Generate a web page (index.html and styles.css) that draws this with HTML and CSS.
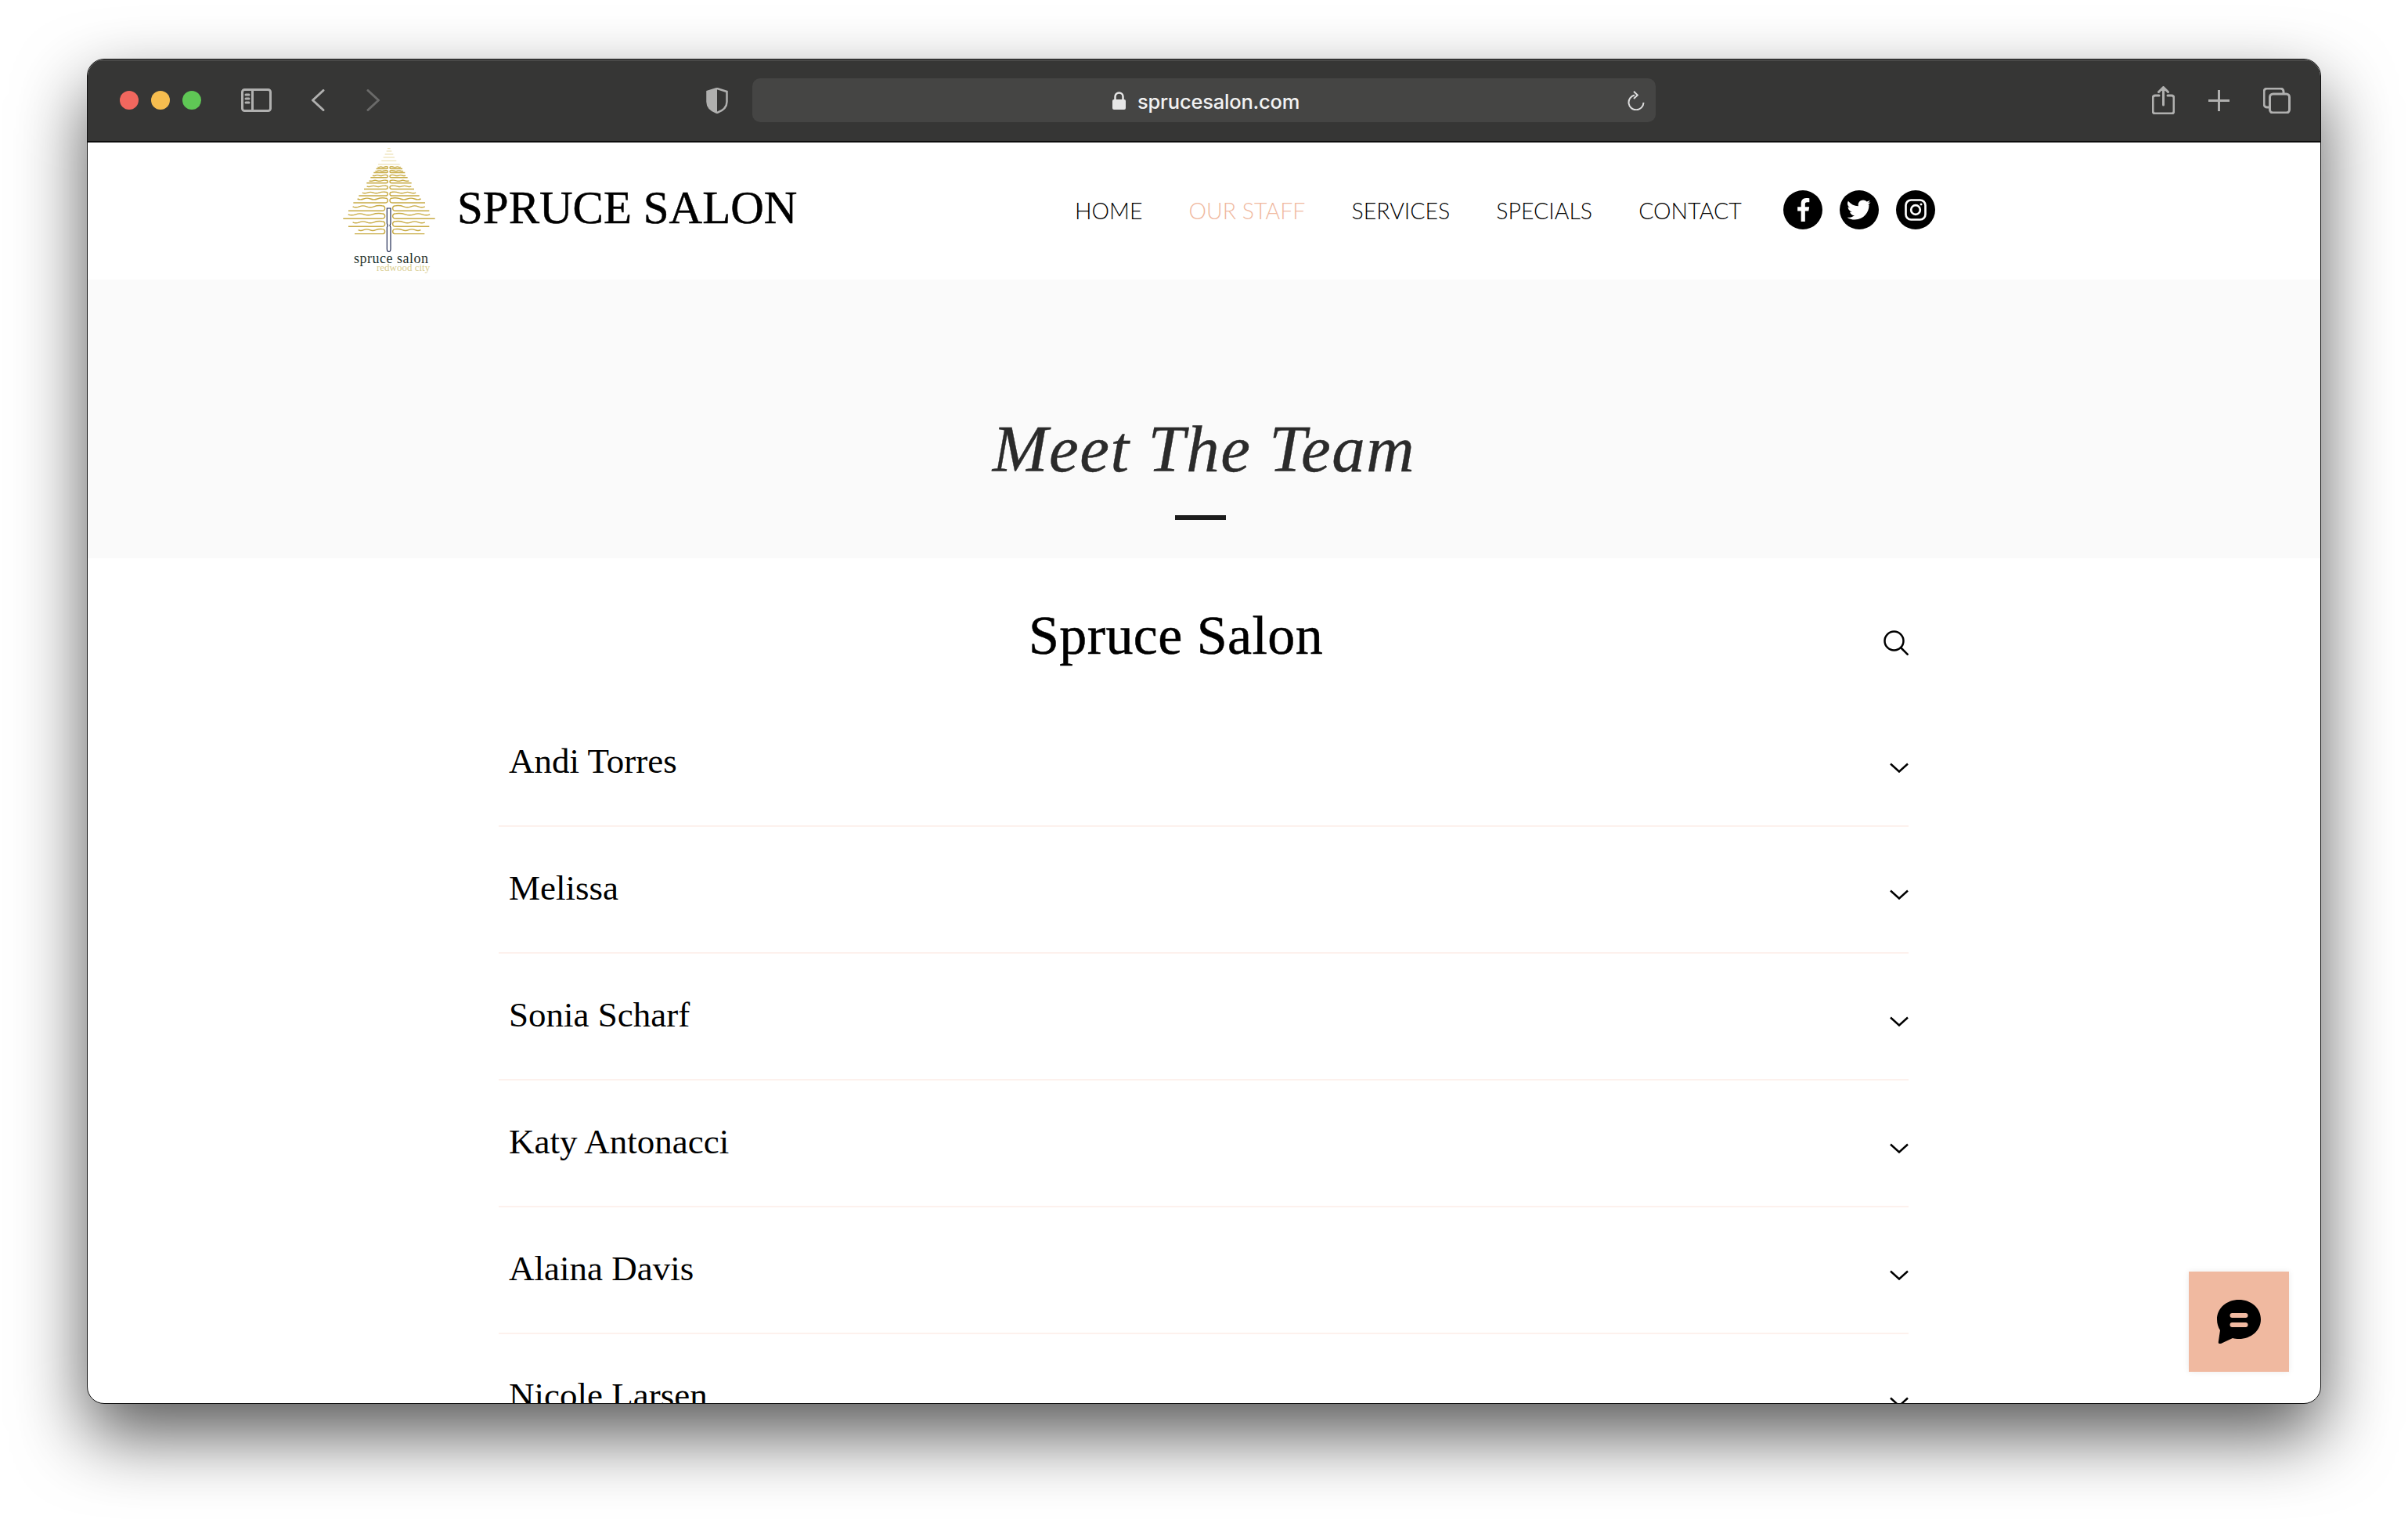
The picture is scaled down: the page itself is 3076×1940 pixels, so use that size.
FILE: index.html
```html
<!DOCTYPE html>
<html lang="en">
<head>
<meta charset="utf-8">
<title>Spruce Salon</title>
<link rel="stylesheet" href="styles.css">
</head>
<body>
<div class="window">
  <div class="chrome">
    <div class="lights"><i class="light red"></i><i class="light yellow"></i><i class="light green"></i></div>
    <svg class="ic sidebar" viewBox="0 0 39 30"><rect x="1.5" y="1.5" width="36" height="27" rx="3"/><path d="M14.5 1.5v27M6 8h4M6 13h4M6 18h4"/></svg>
    <svg class="ic back" viewBox="0 0 18 28"><path d="M16 1.5 2.5 14 16 26.500"/></svg>
    <svg class="ic forward" viewBox="0 0 18 28"><path d="M2 1.500 15.500 14 2 26.500"/></svg>
    <svg class="shield" viewBox="0 0 28 33"><path class="shield-o" d="M14 1 26.500 5v13c0 7-5.500 11.500-12.500 14C7 29.500 1.500 25 1.500 18V5Z"/><path class="shield-f" d="M14 1v31C7 29.500 1.500 25 1.500 18V5Z"/></svg>
    <div class="urlbar">
      <svg class="lock" viewBox="0 0 17 23"><path class="lock-s" d="M3.500 11V6.500a5 5 0 0 1 10 0V11"/><rect y="10" width="17" height="13" rx="2"/></svg>
      <span class="url">sprucesalon.com</span>
      <svg class="reload" viewBox="0 0 22 25"><path d="M9 5.500A9.500 9.500 0 1 0 20.500 15M8 .8 12.800 5.500 8 10"/></svg>
    </div>
    <div class="tools">
      <svg class="ic share" viewBox="0 0 29 36"><path d="M9 12H4a3 3 0 0 0-3 3v17a3 3 0 0 0 3 3h21a3 3 0 0 0 3-3V15a3 3 0 0 0-3-3h-5M14.500 24V2M8.500 7.500l6-6 6 6"/></svg>
      <svg class="ic plus" viewBox="0 0 27 27"><path d="M13.500 0v27M0 13.500h27"/></svg>
      <svg class="ic tabs" viewBox="0 0 35 33"><path d="M7 25H5a4 4 0 0 1-4-4V5a4 4 0 0 1 4-4h17a4 4 0 0 1 4 4v2"/><rect x="8.500" y="8" width="25" height="24" rx="4"/></svg>
    </div>
  </div>

  <div class="page">
    <header class="site-head">
      <div class="logo">
        <svg class="tree" viewBox="0 0 600 420">
          <defs><path id="s" class="strand" d="M0 19H92Q100 19 100 10T92 1Q80-1 70 4T50 4 30 4 12 4"/></defs>
          <g class="gold">
            <use href="#s" transform="translate(102 364) scale(1.16 1)"/><use href="#s" transform="translate(370 364) scale(-1.22 1)"/>
            <use href="#s" transform="translate(78 334) scale(1.4 1.1)"/><use href="#s" transform="translate(388 334) scale(-1.4 1.1)"/>
            <use href="#s" transform="translate(58 304) scale(1.6 1.1)"/><use href="#s" transform="translate(410 304) scale(-1.62 1.1)"/>
            <use href="#s" transform="translate(78 274) scale(1.4 1.1)"/><use href="#s" transform="translate(388 274) scale(-1.4 1.1)"/>
            <use href="#s" transform="translate(97 245) scale(1.32 1)"/><use href="#s" transform="translate(372 245) scale(-1.35 1)"/>
            <use href="#s" transform="translate(118 222) scale(1.11 .8)"/><use href="#s" transform="translate(350 222) scale(-1.13 .8)"/>
            <use href="#s" transform="translate(138 198) scale(.91 .7)"/><use href="#s" transform="translate(330 198) scale(-.93 .7)"/>
            <use href="#s" transform="translate(148 177) scale(.81 .6)"/><use href="#s" transform="translate(320 177) scale(-.83 .6)"/>
            <use href="#s" transform="translate(163 157) scale(.66 .55)"/><use href="#s" transform="translate(305 157) scale(-.68 .55)"/>
            <use href="#s" transform="translate(175 140) scale(.54 .45)"/><use href="#s" transform="translate(295 140) scale(-.58 .45)"/>
            <use href="#s" transform="translate(185 125) scale(.44 .45)"/><use href="#s" transform="translate(285 125) scale(-.48 .45)"/>
          </g>
          <path class="lines" d="M192 117H275M205 103H262M212 90H255M218 78H250M224 66H244M228 56H239"/>
          <path class="trunk" d="M226 285h14v58l-3 8 3 7v82q0 11-7 11t-7-11v-82l3-7-3-8Z"/>
        </svg>
        <div class="logo-name">spruce salon</div>
        <div class="logo-city">redwood city</div>
      </div>
      <div class="brand">SPRUCE SALON</div>
      <nav class="nav">
        <a>HOME</a><a class="active">OUR STAFF</a><a>SERVICES</a><a>SPECIALS</a><a>CONTACT</a>
      </nav>
      <div class="social">
        <span class="soc"><svg viewBox="0 0 24 24"><path d="M13.700 21v-8.100h2.700l.5-3.200h-3.200v-2c0-.9.300-1.600 1.600-1.600H17V3.200C16.700 3.100 15.700 3 14.600 3c-2.400 0-4 1.400-4 4.100v2.600H7.900v3.200h2.700V21Z"/></svg></span>
        <span class="soc"><svg viewBox="0 0 24 24"><path d="M19.500 8.100v.5c0 5.100-3.900 10.900-10.900 10.900-2.200 0-4.200-.6-5.900-1.700.3 0 .6.100.9.100 1.800 0 3.400-.6 4.800-1.600-1.700 0-3.100-1.100-3.600-2.700.2 0 .5.100.7.100.3 0 .7 0 1-.1-1.800-.4-3.100-1.900-3.100-3.800v0c.5.300 1.100.5 1.700.5C3.700 9.700 3 8.500 3 7.100c0-.7.200-1.400.5-1.900C5.400 7.500 8.200 9 11.300 9.200c-.1-.3-.1-.6-.1-.9 0-2.100 1.700-3.800 3.800-3.800 1.100 0 2.100.5 2.800 1.200.9-.2 1.700-.5 2.400-1-.3.900-.9 1.700-1.700 2.100.8-.1 1.500-.3 2.200-.6-.5.8-1.200 1.400-1.900 1.900Z"/></svg></span>
        <span class="soc"><svg class="insta" viewBox="0 0 24 24"><rect x="4.500" y="4.500" width="15" height="15" rx="4"/><circle cx="12" cy="12" r="3.500"/><circle class="dot" cx="16.200" cy="7.800" r=".9"/></svg></span>
      </div>
    </header>

    <section class="hero">
      <h1 class="hero-title">Meet The Team</h1>
      <div class="hero-rule"></div>
    </section>

    <section class="staff">
      <div class="staff-head">
        <h2 class="staff-title">Spruce Salon</h2>
        <svg class="search" viewBox="0 0 32 32"><circle cx="13.500" cy="13.500" r="12"/><path d="m22.500 22.500 9 9"/></svg>
      </div>
      <div class="row"><span class="name">Andi Torres</span><svg class="chev" viewBox="0 0 24 13"><path d="M1 1.500 12 11.500 23 1.500"/></svg></div>
      <div class="row"><span class="name">Melissa</span><svg class="chev" viewBox="0 0 24 13"><path d="M1 1.500 12 11.500 23 1.500"/></svg></div>
      <div class="row"><span class="name">Sonia Scharf</span><svg class="chev" viewBox="0 0 24 13"><path d="M1 1.500 12 11.500 23 1.500"/></svg></div>
      <div class="row"><span class="name">Katy Antonacci</span><svg class="chev" viewBox="0 0 24 13"><path d="M1 1.500 12 11.500 23 1.500"/></svg></div>
      <div class="row"><span class="name">Alaina Davis</span><svg class="chev" viewBox="0 0 24 13"><path d="M1 1.500 12 11.500 23 1.500"/></svg></div>
      <div class="row"><span class="name">Nicole Larsen</span><svg class="chev" viewBox="0 0 24 13"><path d="M1 1.500 12 11.500 23 1.500"/></svg></div>
    </section>

    <div class="chat">
      <svg viewBox="0 0 56 56"><path class="bubble" d="M28 0c15.500 0 28 10.500 28 25S43.500 50 28 50c-3 0-5.500-.3-8-1L5 56c-2 .8-3.500 0-3.200-2.300L4 39C1.500 35 0 30.500 0 25 0 10.500 12.500 0 28 0Z"/><rect class="bar" x="16.500" y="17" width="23" height="6" rx="3"/><rect class="bar" x="16.500" y="29" width="23" height="6" rx="3"/></svg>
    </div>
  </div>
</div>
</body>
</html>
```
FILE: styles.css
```css
* { box-sizing: border-box; }
html, body { margin: 0; background: #fff; }
body { padding: 75px 111px 0; height: 1940px; overflow: hidden; font-family: "Liberation Serif", serif; }

.window {
  width: 2854px; height: 1718px; border: 1.500px solid #111; border-radius: 22px;
  overflow: hidden; background: #fff; box-shadow: 0 40px 90px rgba(0,0,0,.65);
  display: flex; flex-direction: column;
}

.chrome {
  height: 106px; flex: none; background: #363635; border-bottom: 2px solid #0c0c0c;
  display: flex; align-items: center; padding-left: 41px; box-shadow: inset 0 1.500px 0 #555;
}
.lights { display: flex; gap: 16px; width: 155px; flex: none; }
.light { width: 24px; height: 24px; border-radius: 50%; }
.red { background: #f1675e; }
.yellow { background: #f6bd4f; }
.green { background: #5fc755; }
.ic { fill: none; stroke: #b0b0af; stroke-width: 3; stroke-linecap: round; stroke-linejoin: round; flex: none; }
.sidebar { width: 39px; height: 30px; margin-right: 50px; }
.back { width: 18px; height: 28px; margin-right: 53px; }
.forward { width: 18px; height: 28px; margin-right: 416px; stroke: #6a6a69; }
.shield { width: 28px; height: 33px; margin-right: 31px; flex: none; }
.shield-o { fill: none; stroke: #b0b0af; stroke-width: 2.500; }
.shield-f { fill: #b0b0af; }
.urlbar {
  width: 1154px; height: 56px; background: #454544; border-radius: 10px; flex: none;
  display: flex; align-items: center; padding-left: 460px; margin-right: 634px;
}
.lock { width: 17px; height: 23px; fill: #e6e6e6; margin-right: 15px; flex: none; }
.lock-s { fill: none; stroke: #e6e6e6; stroke-width: 2.500; }
.url { font: 500 25.500px/1 Inter, sans-serif; color: #f2f2f2; width: 626px; letter-spacing: -.2px; position: relative; top: 2px; }
.reload { width: 22px; height: 25px; fill: none; stroke: #dcdcdc; stroke-width: 2; flex: none; }
.tools { display: flex; align-items: center; }
.share { width: 29px; height: 36px; margin-right: 43px; }
.plus { width: 27px; height: 27px; margin-right: 43px; }
.tabs { width: 35px; height: 33px; }

.page { flex: 1; min-height: 0; position: relative; }

.site-head { height: 175px; display: flex; align-items: flex-start; padding-left: 326px; }
.logo { width: 120px; height: 175px; padding-top: 9px; margin-right: 26px; flex: none; }
.tree { display: block; width: 200px; height: 140px; margin: -20px 0 0 -19px; overflow: visible; }
.strand { fill: none; stroke: #c8ab45; stroke-width: 1.400px; vector-effect: non-scaling-stroke; }
.lines { fill: none; stroke: #e3d394; stroke-width: 2.500; }
.trunk { fill: #fff; stroke: #1c2750; stroke-width: 3.500; }
.logo-name { font-size: 18px; line-height: 13px; color: #1f3330; margin: 13px 0 0 14px; white-space: nowrap; letter-spacing: .5px; }
.logo-city { font-size: 13px; line-height: 10px; color: #d9cd8f; margin: 0 0 0 43px; white-space: nowrap; }
.brand { font-size: 59px; line-height: 1; color: #000; margin-top: 54px; width: 431px; white-space: nowrap; flex: none; -webkit-text-stroke: .5px #000; }
.nav { display: flex; gap: 59px; margin: 69px 0 0 358px; font: 300 28.500px/36px Lato, sans-serif; color: #000; flex: none; }
.active { color: #f0b9a0; }
.social { display: flex; gap: 22px; margin: 61px 0 0 53px; }
.soc { width: 50px; height: 50px; background: #000; border-radius: 50%; display: flex; align-items: center; justify-content: center; }
.soc svg { width: 40px; height: 40px; fill: #fff; }
.soc .insta { fill: none; stroke: #fff; stroke-width: 1.600; }
.soc .insta .dot { fill: #fff; stroke: none; }

.hero { height: 356px; background: #fafafa; display: flex; flex-direction: column; align-items: center; }
.hero-title { margin: 166px 0 0; font-size: 85px; line-height: 100px; font-weight: 400; font-style: italic; color: #2b2b2b; letter-spacing: 1.500px; -webkit-text-stroke: .4px #2b2b2b; }
.hero-rule { width: 65px; height: 6px; background: #1c1c1c; margin: 35px 10px 0 0; }

.staff { width: 1801px; margin: 0 auto 0 525px; }
.staff-head { height: 181px; display: flex; align-items: flex-start; padding-left: 677px; }
.staff-title { margin: 59px 0 0; font-size: 70px; line-height: 80px; font-weight: 400; color: #000; white-space: nowrap; letter-spacing: .4px; -webkit-text-stroke: .5px #000; }
.search { width: 32px; height: 32px; margin: 92px 0 0 auto; fill: none; stroke: #000; stroke-width: 2.500; flex: none; }
.row {
  height: 162px; border-bottom: 2px solid #fdf1ed; display: flex; justify-content: space-between;
  padding: 52px 0 0 13px;
}
.name { font-size: 45px; line-height: 52px; color: #000; white-space: nowrap; }
.chev { width: 24px; height: 13px; margin-top: 28px; fill: none; stroke: #000; stroke-width: 2.500; flex: none; }

.chat { position: absolute; right: 40px; bottom: 40px; width: 128px; height: 128px; background: #f0b9a0; box-shadow: 0 0 8px rgba(0,0,0,.08); display: flex; align-items: center; justify-content: center; }
.chat svg { width: 56px; height: 56px; }
.bubble { fill: #000; }
.bar { fill: #f0b9a0; }
```
